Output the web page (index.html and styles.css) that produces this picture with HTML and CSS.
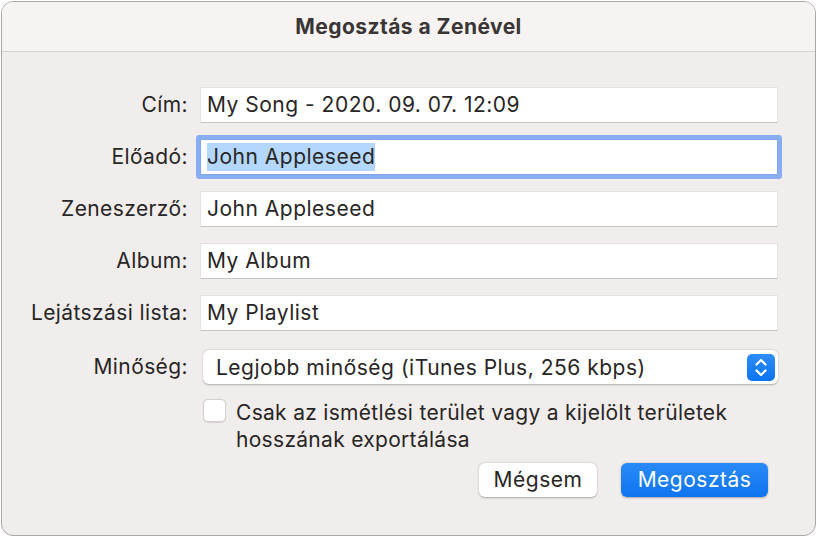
FILE: index.html
```html
<!DOCTYPE html>
<html lang="hu">
<head>
    <meta charset="UTF-8">
    <meta name="viewport" content="width=device-width, initial-scale=1.0">
    <title>Megosztás a Zenével</title>
    <link rel="stylesheet" href="styles.css">
</head>
<body>
    <div class="window">
        <div class="titlebar">Megosztás a Zenével</div>
        <div class="form">
            <div class="label">Cím:</div>
            <div class="field">My Song - 2020. 09. 07. 12:09</div>

            <div class="label">Előadó:</div>
            <div class="field focused"><span class="selected">John Appleseed</span></div>

            <div class="label">Zeneszerző:</div>
            <div class="field">John Appleseed</div>

            <div class="label">Album:</div>
            <div class="field">My Album</div>

            <div class="label">Lejátszási lista:</div>
            <div class="field">My Playlist</div>

            <div class="label popup-label">Minőség:</div>
            <div class="popup">
                <span>Legjobb minőség (iTunes Plus, 256 kbps)</span>
                <span class="stepper">
                    <svg width="28" height="27" viewBox="0 0 28 27">
                        <path d="M9.5 10.5 L14 6 L18.5 10.5" fill="none" stroke="#fff" stroke-width="2.2" stroke-linecap="round" stroke-linejoin="round"/>
                        <path d="M9.5 16.5 L14 21 L18.5 16.5" fill="none" stroke="#fff" stroke-width="2.2" stroke-linecap="round" stroke-linejoin="round"/>
                    </svg>
                </span>
            </div>

            <div class="spacer"></div>
            <label class="check">
                <span class="box"></span>
                <span class="check-text">Csak az ismétlési terület vagy a kijelölt területek hosszának exportálása</span>
            </label>

            <div class="spacer"></div>
            <div class="buttons">
                <button class="btn">Mégsem</button>
                <button class="btn primary">Megosztás</button>
            </div>
        </div>
    </div>
</body>
</html>
```

FILE: styles.css
```css
html, body {
    margin: 0;
    padding: 0;
    background: #ffffff;
}
body {
    padding: 1px;
    font-family: 'Inter', 'Liberation Sans', sans-serif;
    color: #282525;
    letter-spacing: 0.5px;
}
.window {
    width: 815px;
    height: 535px;
    box-sizing: border-box;
    border: 1px solid #a9a7a7;
    border-radius: 12px;
    background: #f2eded;
    overflow: hidden;
}
.titlebar {
    height: 49px;
    line-height: 49px;
    background: #f8f3f3;
    border-bottom: 1px solid #d6d1d1;
    text-align: center;
    font-size: 21px;
    font-weight: 700;
    letter-spacing: 0.45px;
    color: #3a3636;
}
.form {
    display: grid;
    grid-template-columns: 186px 578px;
    column-gap: 12px;
    row-gap: 16px;
    padding-top: 35px;
    align-items: center;
}
.label {
    text-align: right;
    font-size: 21px;
    line-height: 36px;
    letter-spacing: 0.4px;
    white-space: nowrap;
}
.field {
    height: 36px;
    box-sizing: border-box;
    background: #fff;
    border: 1px solid #e6e2e2;
    border-bottom-color: #c6c2c2;
    padding-left: 6px;
    font-size: 21px;
    line-height: 34px;
    white-space: nowrap;
}
.field.focused {
    border-color: #7fa5ee;
    box-shadow: 0 0 0 4px #88adf2;
    border-radius: 1px;
}
.selected {
    background: #b3d7ff;
    display: inline-block;
    line-height: 28px;
}
.popup-label {
    margin-top: 2px;
}
.popup {
    margin: 2px 0 0 3px;
    height: 34px;
    box-sizing: border-box;
    background: #fff;
    border-radius: 6px;
    box-shadow: 0 0.5px 2px rgba(0, 0, 0, 0.28);
    display: flex;
    align-items: center;
    justify-content: space-between;
    padding: 0 3px 0 13px;
    font-size: 21px;
}
.stepper {
    width: 28px;
    height: 27px;
    border-radius: 5px;
    background: linear-gradient(#2f8cf8, #0b74f2);
    display: flex;
}
.spacer {
    height: 1px;
}
.check {
    display: flex;
    align-items: flex-start;
    gap: 10px;
    margin: 1px 0 0 3px;
    font-size: 21px;
    line-height: 27px;
    letter-spacing: 0.3px;
}
.box {
    flex: none;
    width: 23px;
    height: 23px;
    margin-top: -3px;
    box-sizing: border-box;
    background: #fff;
    border: 1px solid #d4d0d0;
    border-radius: 5px;
    box-shadow: 0 0.5px 1px rgba(0, 0, 0, 0.12);
}
.check-text {
    margin-top: -3px;
}
.buttons {
    display: flex;
    justify-content: flex-end;
    gap: 24px;
    margin-top: -6px;
    padding-right: 10px;
}
.btn {
    height: 34px;
    box-sizing: border-box;
    border: none;
    border-radius: 6px;
    background: #fff;
    box-shadow: 0 0.5px 2px rgba(0, 0, 0, 0.3);
    font-family: inherit;
    font-size: 21px;
    letter-spacing: 0.5px;
    color: #282525;
    padding: 0 0 2px;
    width: 118px;
}
.btn.primary {
    width: 147px;
    background: linear-gradient(#2b8af8, #0d74f0);
    color: #fff;
}
```
